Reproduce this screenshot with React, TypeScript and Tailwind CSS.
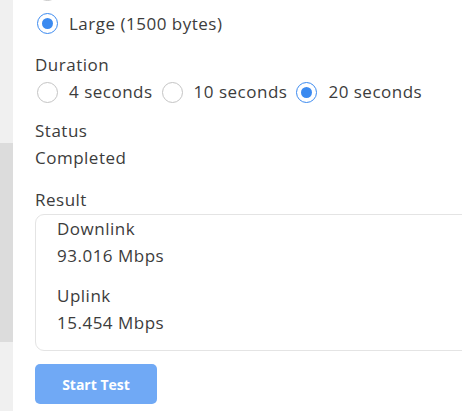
import React from 'react'

function Radio({ checked, label }: { checked?: boolean; label: string }) {
  return (
    <label className="flex items-center">
      <span
        className={
          checked
            ? 'ml-[2px] w-[21px] h-[21px] rounded-full border border-[#3b8af0] flex items-center justify-center shrink-0'
            : 'ml-[2px] w-[21px] h-[21px] rounded-full border border-[#c4c4c4] shrink-0'
        }
      >
        {checked && <span className="w-[11px] h-[11px] rounded-full bg-[#3b8af0]" />}
      </span>
      <span className="ml-[11px] mr-[7px]">{label}</span>
    </label>
  )
}

export default function App() {
  return (
    <div
      className="w-[462px] h-[411px] overflow-hidden flex bg-white text-[#3c3c3c] text-[17px] tracking-[0.5px]"
      style={{ fontFamily: '"Open Sans", Lato, sans-serif' }}
    >
      {/* left scroll strip */}
      <div className="w-[13px] shrink-0 flex flex-col">
        <div className="h-[143px] bg-[#f0f0f0]" />
        <div className="h-[199px] bg-[#dcdcdc]" />
        <div className="flex-1 bg-[#f0f0f0]" />
      </div>

      <div className="flex-1 pl-[22px] -mt-[26px]">
        {/* previous option, scrolled out of view */}
        <div className="h-[33px] flex items-center">
          <span className="w-[21px] h-[21px] rounded-full border border-[#c4c4c4] ml-[2px]" />
        </div>
        <div className="h-[33px] flex items-center">
          <Radio checked label="Large (1500 bytes)" />
        </div>

        <div className="mt-[15px] leading-[20px]">Duration</div>
        <div className="flex items-center mt-[4px] h-[26px]">
          <Radio label="4 seconds" />
          <Radio label="10 seconds" />
          <Radio checked label="20 seconds" />
        </div>

        <div className="mt-[16px] leading-[20px]">Status</div>
        <div className="mt-[7px] leading-[20px]">Completed</div>

        <div className="mt-[22px] leading-[20px]">Result</div>
        <div className="mt-[4px] w-[440px] h-[137px] border border-[#e4e4e4] rounded-[9px] pl-[21px] pt-[4px]">
          <div className="leading-[20px]">Downlink</div>
          <div className="mt-[7px] leading-[20px]">93.016 Mbps</div>
          <div className="mt-[20px] leading-[20px]">Uplink</div>
          <div className="mt-[7px] leading-[20px]">15.454 Mbps</div>
        </div>

        <button className="mt-[13px] w-[122px] h-[40px] rounded-[5px] bg-[#70a9f5] text-white font-bold text-[14px] tracking-normal">
          Start Test
        </button>
      </div>
    </div>
  )
}
